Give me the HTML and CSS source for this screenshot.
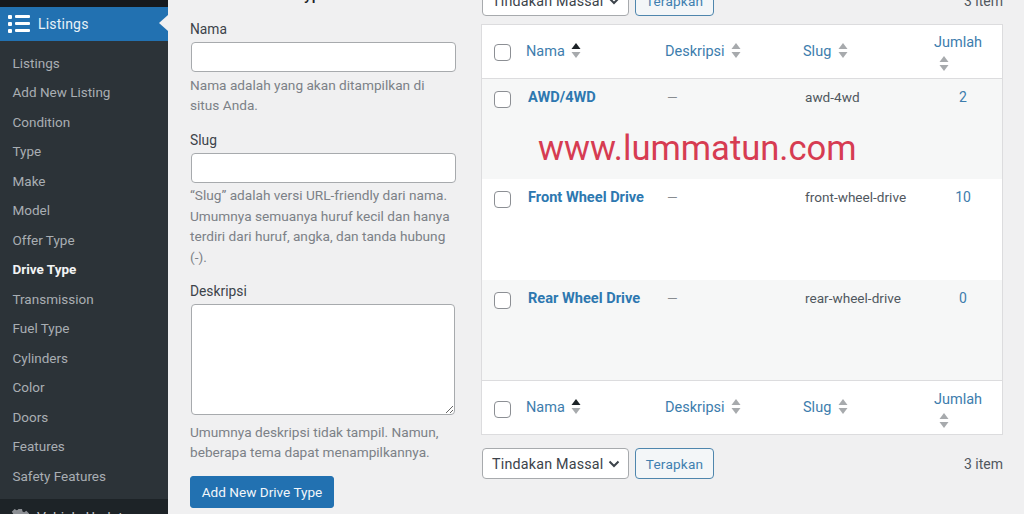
FILE: index.html
```html
<!DOCTYPE html>
<html lang="id">

<head>
    <meta charset="UTF-8">
    <title>Drive Type</title>
    <link rel="stylesheet" href="styles.css">
</head>

<body>
    <div class="page">
        <nav class="sidebar">
            <div class="menu-top"></div>
            <div class="menu-current">
                <svg class="menu-icon" width="22" height="18" viewBox="0 0 22 18">
                    <rect x="0" y="0" width="4" height="4" rx="1"></rect>
                    <rect x="0" y="7" width="4" height="4" rx="1"></rect>
                    <rect x="0" y="14" width="4" height="4" rx="1"></rect>
                    <rect x="7" y="0" width="15" height="3" rx="1"></rect>
                    <rect x="7" y="7" width="15" height="3" rx="1"></rect>
                    <rect x="7" y="14" width="15" height="3" rx="1"></rect>
                </svg>
                <span>Listings</span>
            </div>
            <ul class="submenu">
                <li>Listings</li>
                <li>Add New Listing</li>
                <li>Condition</li>
                <li>Type</li>
                <li>Make</li>
                <li>Model</li>
                <li>Offer Type</li>
                <li class="active">Drive Type</li>
                <li>Transmission</li>
                <li>Fuel Type</li>
                <li>Cylinders</li>
                <li>Color</li>
                <li>Doors</li>
                <li>Features</li>
                <li>Safety Features</li>
            </ul>
            <div class="menu-next">
                <svg width="18" height="18" viewBox="0 0 18 18">
                    <path d="M7 0h4l.5 2.500 1.700.7 2.100-1.400 2.800 2.800-1.400 2.100.7 1.700 2.500.5v4l-2.500.5-.7 1.700 1.400 2.100-2.800 2.800-2.100-1.400-1.700.7L11 18H7l-.5-2.500-1.700-.7-2.100 1.400-2.800-2.800 1.400-2.100-.7-1.700L-1 11V7l2.500-.5.7-1.700-1.400-2.100 2.800-2.800 2.100 1.400 1.700-.7z"></path>
                </svg>
                <span>Vehicle Updates</span>
            </div>
        </nav>

        <main class="content">
            <form class="add-form">
                <h2>Add New Drive Type</h2>
                <label>Nama</label>
                <input type="text" class="field">
                <p class="hint">Nama adalah yang akan ditampilkan di situs Anda.</p>

                <label class="next-label">Slug</label>
                <input type="text" class="field">
                <p class="hint">“Slug” adalah versi URL-friendly dari nama. Umumnya semuanya huruf kecil dan hanya terdiri dari huruf, angka, dan tanda hubung (-).</p>

                <label class="next-label">Deskripsi</label>
                <textarea class="field area"></textarea>
                <p class="hint">Umumnya deskripsi tidak tampil. Namun, beberapa tema dapat menampilkannya.</p>

                <button type="button" class="primary-btn">Add New Drive Type</button>
            </form>

            <section class="list">
                <div class="tablenav top-nav">
                    <div class="bulk-select">Tindakan Massal
                        <svg width="12" height="8" viewBox="0 0 12 8"><path d="M1.500 1.500 6 6l4.500-4.500"></path></svg>
                    </div>
                    <button type="button" class="apply-btn">Terapkan</button>
                    <span class="count">3 item</span>
                </div>

                <div class="table-wrap">
                    <table>
                        <thead>
                            <tr>
                                <th class="col-check"><span class="check"></span></th>
                                <th class="col-name">Nama
                                    <svg class="sort current" width="10" height="15" viewBox="0 0 10 15"><path class="up" d="M5 0l4.500 6h-9z"></path><path d="M.500 9h9L5 15z"></path></svg>
                                </th>
                                <th class="col-desc">Deskripsi
                                    <svg class="sort" width="10" height="15" viewBox="0 0 10 15"><path d="M5 0l4.500 6h-9z"></path><path d="M.500 9h9L5 15z"></path></svg>
                                </th>
                                <th class="col-slug">Slug
                                    <svg class="sort" width="10" height="15" viewBox="0 0 10 15"><path d="M5 0l4.500 6h-9z"></path><path d="M.500 9h9L5 15z"></path></svg>
                                </th>
                                <th class="col-count">Jumlah
                                    <svg class="sort below" width="10" height="15" viewBox="0 0 10 15"><path d="M5 0l4.500 6h-9z"></path><path d="M.500 9h9L5 15z"></path></svg>
                                </th>
                            </tr>
                        </thead>
                        <tbody>
                            <tr class="alt">
                                <td><span class="check"></span></td>
                                <td class="term">AWD/4WD</td>
                                <td class="dash">—</td>
                                <td>awd-4wd</td>
                                <td class="num">2</td>
                            </tr>
                            <tr>
                                <td><span class="check"></span></td>
                                <td class="term">Front Wheel Drive</td>
                                <td class="dash">—</td>
                                <td>front-wheel-drive</td>
                                <td class="num">10</td>
                            </tr>
                            <tr class="alt">
                                <td><span class="check"></span></td>
                                <td class="term">Rear Wheel Drive</td>
                                <td class="dash">—</td>
                                <td>rear-wheel-drive</td>
                                <td class="num">0</td>
                            </tr>
                        </tbody>
                        <tfoot>
                            <tr>
                                <th class="col-check"><span class="check"></span></th>
                                <th class="col-name">Nama
                                    <svg class="sort current" width="10" height="15" viewBox="0 0 10 15"><path class="up" d="M5 0l4.500 6h-9z"></path><path d="M.500 9h9L5 15z"></path></svg>
                                </th>
                                <th class="col-desc">Deskripsi
                                    <svg class="sort" width="10" height="15" viewBox="0 0 10 15"><path d="M5 0l4.500 6h-9z"></path><path d="M.500 9h9L5 15z"></path></svg>
                                </th>
                                <th class="col-slug">Slug
                                    <svg class="sort" width="10" height="15" viewBox="0 0 10 15"><path d="M5 0l4.500 6h-9z"></path><path d="M.500 9h9L5 15z"></path></svg>
                                </th>
                                <th class="col-count">Jumlah
                                    <svg class="sort below" width="10" height="15" viewBox="0 0 10 15"><path d="M5 0l4.500 6h-9z"></path><path d="M.500 9h9L5 15z"></path></svg>
                                </th>
                            </tr>
                        </tfoot>
                    </table>
                    <div class="watermark">www.lummatun.com</div>
                </div>

                <div class="tablenav bottom-nav">
                    <div class="bulk-select">Tindakan Massal
                        <svg width="12" height="8" viewBox="0 0 12 8"><path d="M1.500 1.500 6 6l4.500-4.500"></path></svg>
                    </div>
                    <button type="button" class="apply-btn">Terapkan</button>
                    <span class="count">3 item</span>
                </div>
            </section>
        </main>
    </div>
</body>

</html>
```

FILE: styles.css
```css
* {
    box-sizing: border-box;
}

html,
body {
    margin: 0;
    padding: 0;
    height: 514px;
    overflow: hidden;
}

body {
    font-family: 'Roboto', 'Liberation Sans', sans-serif;
    font-size: 14px;
    color: #3c434a;
    background-color: #f0f0f1;
}

.page {
    display: flex;
    height: 514px;
    overflow: hidden;
}

/* Menu lateral */
.sidebar {
    width: 168px;
    flex: none;
    display: flex;
    flex-direction: column;
    background-color: #2c3338;
    overflow: hidden;
}

.menu-top {
    height: 7px;
    flex: none;
    background-color: #16191d;
}

.menu-current {
    height: 34px;
    flex: none;
    display: flex;
    align-items: center;
    gap: 8px;
    padding-left: 8px;
    background-color: #2271b1;
    color: #e8f1f8;
    font-size: 14px;
    letter-spacing: 0.2px;
    position: relative;
}

.menu-current::after {
    content: "";
    position: absolute;
    right: 0;
    top: 8px;
    border-top: 8px solid transparent;
    border-bottom: 8px solid transparent;
    border-right: 9px solid #f0f0f1;
}

.menu-icon {
    fill: #fff;
}

.submenu {
    list-style: none;
    margin: 0;
    padding: 7.500px 0 0;
    flex: none;
    height: 458px;
}

.submenu li {
    height: 29.500px;
    line-height: 29.500px;
    padding-left: 12.500px;
    color: #a9aeb3;
    font-size: 13.500px;
}

.submenu .active {
    color: #f2f3f4;
    font-weight: 700;
}

.menu-next {
    flex: 1;
    display: flex;
    gap: 8px;
    padding: 10px 0 0 11px;
    background-color: #1d2327;
    color: #c3c4c7;
    font-size: 14px;
    line-height: 18px;
    white-space: nowrap;
}

.menu-next svg {
    fill: #8c8f94;
    overflow: visible;
    flex: none;
}

/* Contenido */
.content {
    flex: 1;
    display: flex;
    align-items: flex-start;
    padding-left: 22px;
    min-width: 0;
}

.add-form {
    width: 266px;
    flex: none;
    margin-top: -15px;
}

.add-form h2 {
    margin: 0 0 14px;
    height: 20px;
    font-size: 15.500px;
    line-height: 20px;
    font-weight: 500;
    color: #1d2327;
}

.add-form label {
    display: block;
    line-height: 20px;
    font-size: 13.800px;
    color: #3c434a;
}

.add-form .next-label {
    margin-top: 14.500px;
}

.field {
    display: block;
    width: 265px;
    height: 30px;
    margin: 3px 0 0 1px;
    background-color: #fff;
    border: 1.500px solid #a7aaad;
    border-radius: 4px;
    resize: none;
}

.field.area {
    width: 264px;
    height: 111px;
    resize: vertical;
}

.hint {
    margin: 2.500px 0 0;
    font-size: 13.650px;
    line-height: 20.400px;
    color: #7c8187;
}

.area + .hint {
    margin-top: 6.400px;
}

.primary-btn {
    display: block;
    width: 144px;
    height: 32px;
    margin-top: 13.400px;
    padding: 0;
    font-family: inherit;
    font-size: 13.600px;
    color: #f2f6fa;
    background-color: #2271b1;
    border: 1px solid #2271b1;
    border-radius: 3px;
}

.list {
    width: 522px;
    flex: none;
    margin-left: 26px;
    margin-top: -15px;
}

.tablenav {
    display: flex;
    align-items: center;
    height: 31px;
}

.top-nav {
    margin-bottom: 8px;
}

.bottom-nav {
    margin-top: 13px;
}

.bulk-select {
    width: 147px;
    height: 31px;
    display: flex;
    align-items: center;
    justify-content: space-between;
    padding: 0 8px 0 9px;
    background-color: #fff;
    border: 1.500px solid #a7aaad;
    border-radius: 4px;
    font-size: 14.300px;
    letter-spacing: 0.2px;
    color: #3c434a;
}

.bulk-select svg {
    fill: none;
    stroke: #3c434a;
    stroke-width: 2;
}

.apply-btn {
    width: 79px;
    height: 31px;
    margin-left: 6px;
    padding: 0;
    font-family: inherit;
    font-size: 13.600px;
    letter-spacing: 0.2px;
    color: #3f7fb0;
    background-color: #f3f6f8;
    border: 1.500px solid #4f86ad;
    border-radius: 4px;
}

.count {
    margin-left: auto;
    padding-right: 1px;
    color: #50575e;
}

/* Tabla */
.table-wrap {
    position: relative;
    width: 522px;
    margin-left: -1px;
    border: 1px solid #dcdcde;
    background-color: #fff;
}

table {
    width: 100%;
    border-collapse: collapse;
    table-layout: fixed;
}

th {
    height: 54px;
    padding: 0;
    text-align: left;
    font-weight: 400;
    font-size: 14.500px;
    color: #3d7dad;
    vertical-align: middle;
}

thead th {
    height: 53.500px;
    border-bottom: 1px solid #dcdcde;
}

tfoot th {
    border-top: 1px solid #dcdcde;
}

td {
    height: 100.500px;
    padding: 8px 0 0 2px;
    vertical-align: top;
    line-height: 20px;
    font-size: 13.600px;
    color: #50575e;
}

td:first-child {
    padding-left: 11.500px;
    padding-top: 12px;
}

th.col-check {
    width: 44px;
    padding-left: 11.500px;
}

thead .col-check .check {
    margin-top: 2px;
}

tfoot .col-check .check {
    margin-top: 4px;
}

.col-name {
    width: 139px;
}

.col-desc {
    width: 138px;
}

.col-slug {
    width: 131px;
}

th.col-count {
    width: 68px;
    line-height: 20px;
    vertical-align: top;
    padding-top: 8px;
}

tfoot th.col-count {
    padding-top: 9px;
}

.alt td {
    background-color: #f6f7f7;
}

.check {
    display: block;
    width: 17px;
    height: 17px;
    background-color: #fff;
    border: 1.500px solid #8c8f94;
    border-radius: 4px;
}

td.term {
    font-size: 14.600px;
    font-weight: 700;
    color: #2d78b0;
}

td.dash {
    color: #888c90;
}

td.num {
    padding: 8px 10px 0 0;
    text-align: center;
    font-size: 14px;
    color: #3d7dad;
}

.sort {
    fill: #a7aaad;
    margin-left: 3px;
    vertical-align: -2px;
}

.sort.current .up {
    fill: #1d2327;
}

.sort.below {
    display: block;
    margin: 3px 0 0 5px;
}

.watermark {
    position: absolute;
    top: 102px;
    left: 56px;
    font-size: 34.600px;
    line-height: 42px;
    white-space: nowrap;
    color: #d63c52;
}
```
